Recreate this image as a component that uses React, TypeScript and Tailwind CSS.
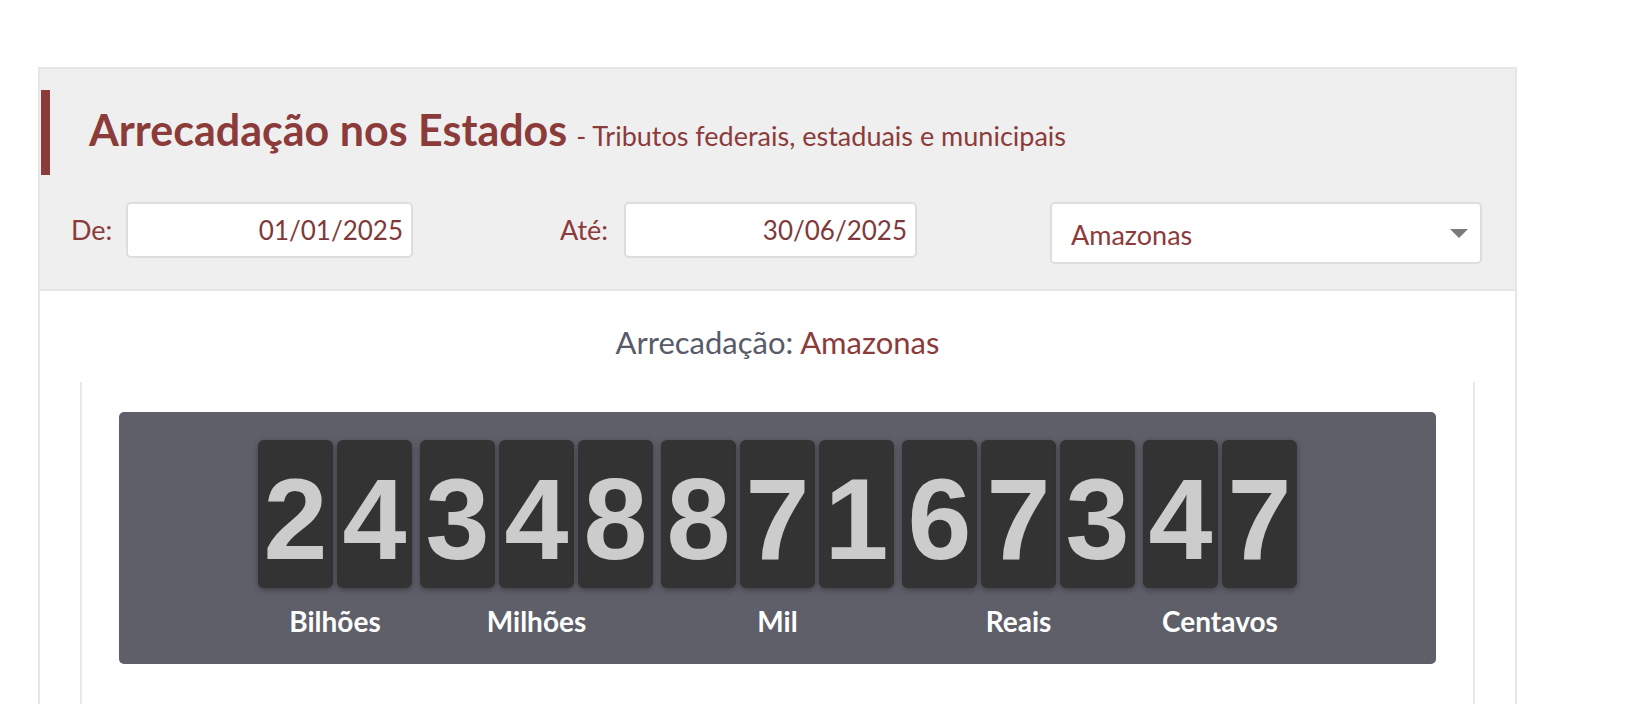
import React from 'react';

const groups: { label: string; digits: string }[] = [
    { label: 'Bilhões', digits: '24' },
    { label: 'Milhões', digits: '348' },
    { label: 'Mil', digits: '871' },
    { label: 'Reais', digits: '673' },
    { label: 'Centavos', digits: '47' },
];

const lato = { fontFamily: 'Lato, "Open Sans", sans-serif' };

const DigitCard: React.FC<{ d: string }> = ({ d }) => (
    <div className="w-[75px] h-[148px] bg-[#333333] rounded-[6px] shadow-[0_2px_6px_rgba(0,0,0,0.35)] flex items-center justify-center pt-[10px]">
        <span className="text-[115px] leading-none font-bold text-[#cccccc] font-['Liberation_Sans',Arial,sans-serif]">
            {d}
        </span>
    </div>
);

const App: React.FC = () => {
    return (
        <div className="min-h-screen bg-white pt-[67px] font-['Lato','Open_Sans',sans-serif]" style={lato}>
            <div className="ml-[38px] w-[1479px] border-2 border-b-0 border-[#e6e6e6]">
                {/* cabeçalho cinza */}
                <div className="bg-[#efefef] border-b-2 border-[#e6e6e6] pt-[21px] pb-[25px]">
                    <div className="flex items-center">
                        <div className="ml-[1px] w-[9px] h-[85px] bg-[#8c3b3b]" />
                        <div className="pl-[39px] flex items-baseline">
                            <h1 className="text-[43px] font-bold text-[#8c3b3b] leading-none">
                                Arrecadação nos Estados
                            </h1>
                            <span className="ml-[9px] text-[27px] text-[#8c3b3b]">
                                - Tributos federais, estaduais e municipais
                            </span>
                        </div>
                    </div>

                    {/* filtros */}
                    <div className="flex items-start mt-[27px]">
                        <div className="flex items-center pl-[31px] w-[494px]">
                            <span className="text-[27px] text-[#8c3b3b] w-[55px]">De:</span>
                            <div className="w-[287px] h-[56px] bg-white border-2 border-[#dddddd] rounded-[5px] flex items-center justify-end pr-[8px] text-[26px] text-[#7e3a3a]">
                                01/01/2025
                            </div>
                        </div>
                        <div className="flex items-center pl-[26px] w-[516px]">
                            <span className="text-[27px] text-[#8c3b3b] w-[64px]">Até:</span>
                            <div className="w-[293px] h-[56px] bg-white border-2 border-[#dddddd] rounded-[5px] flex items-center justify-end pr-[8px] text-[26px] text-[#7e3a3a]">
                                30/06/2025
                            </div>
                        </div>
                        <div className="w-[432px] h-[62px] bg-white border-2 border-[#dddddd] rounded-[5px] flex items-center justify-between pl-[19px] pr-[12px] text-[27px] text-[#8c3b3b]">
                            <span className="pt-[4px]">Amazonas</span>
                            <svg width="18" height="9" viewBox="0 0 18 9">
                                <path d="M0 0 H18 L9 9 Z" fill="#7a7a7a" />
                            </svg>
                        </div>
                    </div>
                </div>

                {/* conteúdo */}
                <div className="pt-[33px]">
                    <p className="text-center text-[31px] leading-[36px] text-[#585b69]">
                        Arrecadação: <span className="text-[#8c3b3b]">Amazonas</span>
                    </p>
                    <div className="mt-[22px] mx-[40px] border-x-2 border-[#e8e8e8] pt-[30px] pb-[40px] px-[37px]">
                        <div className="bg-[#5e5f69] rounded-[5px] pt-[28px] pb-[27px] flex justify-center gap-[8px]">
                            {groups.map((g) => (
                                <div key={g.label} className="flex flex-col items-center">
                                    <div className="flex gap-[4px]">
                                        {g.digits.split('').map((d, i) => (
                                            <DigitCard key={i} d={d} />
                                        ))}
                                    </div>
                                    <span className="mt-[17px] text-[28px] leading-[32px] font-bold text-white">
                                        {g.label}
                                    </span>
                                </div>
                            ))}
                        </div>
                    </div>
                </div>
            </div>
        </div>
    );
};

export default App;
